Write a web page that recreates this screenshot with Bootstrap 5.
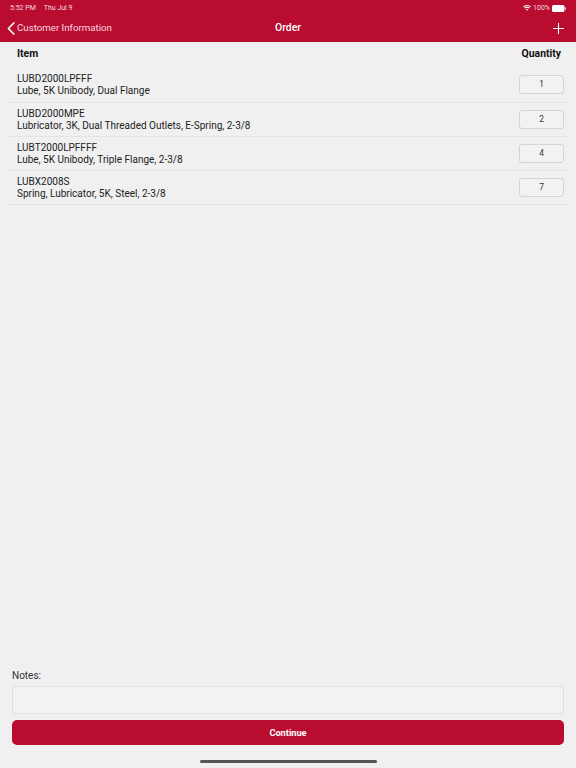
<!DOCTYPE html>
<html lang="en">
<head>
<meta charset="utf-8">
<title>Order</title>
<link rel="stylesheet" href="https://cdn.jsdelivr.net/npm/bootstrap@5.3.0/dist/css/bootstrap.min.css">
<style>
html, body { height: 768px; overflow: hidden; }
body { background: #f0f0f0; color: #222; font-family: "Roboto", "Liberation Sans", sans-serif; font-size: 10px; line-height: 11.5px; }
.app-shell { height: 768px; }
.top-bar { background: #ba0c2f; color: #fff; height: 42px; }
.status-row { height: 14px; padding: 2px 10px 0; font-size: 7px; line-height: 10px; color: #f6dbe1; }
.status-icons { gap: 2px; }
.title-row { height: 28px; padding: 0 12px 0 7px; position: relative; }
.back-text { font-size: 9.7px; color: #f6dbe1; margin-left: 2px; }
.page-title { position: absolute; left: 0; right: 0; text-align: center; font-size: 10.4px; font-weight: 500; }
.head-row { height: 24px; padding: 0 15px 0 17px; font-weight: 700; font-size: 10.4px; color: #111; }
.order-rows { padding: 0 8px; }
.order-row { height: 34px; border-bottom: 1px solid #e4e4e4; padding: 0 4px 0 9px; }
.first-row { height: 37px; padding-top: 1px; }
.qty-box { width: 45px; height: 19px; border: 1px solid #d4d4d4; border-radius: 3px; background: #f2f2f2; font-size: 8.4px; color: #333; }
.notes-area { padding: 0 12px; }
.notes-label { font-size: 10px; padding-top: 1px; margin-bottom: 4px; line-height: 12px; color: #333; }
.notes-box { height: 28px; border: 1px solid #dedede; border-radius: 3px; background: #f2f2f2; margin-bottom: 6px; }
.go-btn { height: 25px; background: #ba0c2f; border: 0; border-radius: 5px; color: #fff; font-size: 9.2px; font-weight: 700; padding: 0; line-height: 25px; }
.go-btn:hover { background: #ba0c2f; color: #fff; }
.home-wrap { height: 23px; padding-top: 15px; }
.home-pill { width: 177px; height: 3px; border-radius: 2px; background: #555; }
</style>
</head>
<body>
<div class="app-shell d-flex flex-column">
  <header class="top-bar flex-shrink-0">
    <div class="status-row d-flex align-items-center justify-content-between">
      <div class="d-flex gap-2"><span>5:52 PM</span><span>Thu Jul 9</span></div>
      <div class="status-icons d-flex align-items-center">
        <svg width="8" height="6" viewBox="0 0 18 14" aria-hidden="true"><path d="M9 13.5 6.3 10.4a4 4 0 0 1 5.4 0ZM4.5 8.4 2.7 6.4a9.4 9.4 0 0 1 12.6 0l-1.8 2a6.7 6.7 0 0 0-9 0ZM1.6 5.2 0 3.4a13.4 13.4 0 0 1 18 0l-1.6 1.8a11 11 0 0 0-14.8 0Z" fill="#fff"/></svg>
        <span>100%</span>
        <svg width="14" height="7" viewBox="0 0 14 7" aria-hidden="true"><rect x="0" y="0" width="12.5" height="7" rx="1.6" fill="#fff"/><rect x="13" y="2.2" width="1" height="2.6" rx=".5" fill="#f6dbe1"/></svg>
      </div>
    </div>
    <div class="title-row d-flex align-items-center justify-content-between">
      <div class="d-flex align-items-center">
        <svg width="8" height="13" viewBox="0 0 8 13" aria-hidden="true"><path d="M6.8 1 1.4 6.5l5.4 5.5" fill="none" stroke="#fff" stroke-width="1.7" stroke-linecap="round" stroke-linejoin="round"/></svg>
        <span class="back-text">Customer Information</span>
      </div>
      <span class="page-title">Order</span>
      <svg width="11" height="11" viewBox="0 0 11 11" aria-hidden="true"><path d="M5.5 0v11M0 5.5h11" stroke="#fff" stroke-width="1.1"/></svg>
    </div>
  </header>

  <main class="flex-grow-1">
    <div class="head-row d-flex align-items-center justify-content-between"><span>Item</span><span>Quantity</span></div>
    <div class="order-rows">
      <div class="order-row first-row d-flex align-items-center justify-content-between">
        <div><div>LUBD2000LPFFF</div><div>Lube, 5K Unibody, Dual Flange</div></div>
        <div class="qty-box d-flex align-items-center justify-content-center">1</div>
      </div>
      <div class="order-row d-flex align-items-center justify-content-between">
        <div><div>LUBD2000MPE</div><div>Lubricator, 3K, Dual Threaded Outlets, E-Spring, 2-3/8</div></div>
        <div class="qty-box d-flex align-items-center justify-content-center">2</div>
      </div>
      <div class="order-row d-flex align-items-center justify-content-between">
        <div><div>LUBT2000LPFFFF</div><div>Lube, 5K Unibody, Triple Flange, 2-3/8</div></div>
        <div class="qty-box d-flex align-items-center justify-content-center">4</div>
      </div>
      <div class="order-row d-flex align-items-center justify-content-between">
        <div><div>LUBX2008S</div><div>Spring, Lubricator, 5K, Steel, 2-3/8</div></div>
        <div class="qty-box d-flex align-items-center justify-content-center">7</div>
      </div>
    </div>
  </main>

  <footer class="notes-area flex-shrink-0">
    <div class="notes-label">Notes:</div>
    <div class="notes-box"></div>
    <button type="button" class="btn go-btn w-100">Continue</button>
  </footer>
  <div class="home-wrap d-flex justify-content-center flex-shrink-0"><div class="home-pill"></div></div>
</div>
<script src="https://cdn.jsdelivr.net/npm/bootstrap@5.3.0/dist/js/bootstrap.bundle.min.js"></script>
</body>
</html>
